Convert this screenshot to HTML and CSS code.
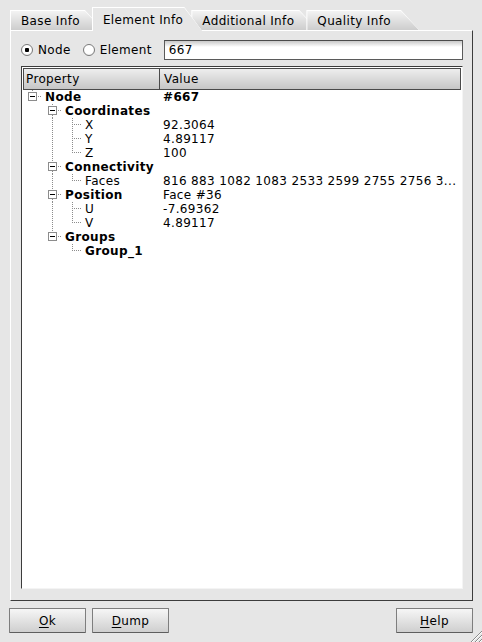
FILE: index.html
```html
<!DOCTYPE html>
<html lang="en">
<head>
    <meta charset="UTF-8">
    <meta name="viewport" content="width=device-width, initial-scale=1.0">
    <title>Mesh Element Info</title>
    <link rel="stylesheet" href="styles.css">
</head>
<body>
    <div class="dialog">
        <!-- Tabs -->
        <div class="tabbar">
            <div class="tab"><div class="tab-face">Base Info</div></div>
            <div class="tab selected"><div class="tab-face">Element Info</div></div>
            <div class="tab"><div class="tab-face">Additional Info</div></div>
            <div class="tab"><div class="tab-face">Quality Info</div></div>
        </div>

        <div class="panel">
            <!-- Node / Element selector -->
            <div class="selector">
                <label class="radio checked"><span class="radio-mark"></span>Node</label>
                <label class="radio"><span class="radio-mark"></span>Element</label>
                <div class="id-field">667</div>
            </div>

            <!-- Property tree -->
            <div class="tree">
                <div class="tree-header">
                    <div class="h-prop">Property</div>
                    <div class="h-val">Value</div>
                </div>
                <div class="tree-body">
                    <div class="row">
                        <div class="prop"><span class="br x up"><i class="exp"></i></span><span class="label bold">Node</span></div>
                        <div class="val bold">#667</div>
                    </div>
                    <div class="row">
                        <div class="prop"><span class="br"></span><span class="br x up down"><i class="exp"></i></span><span class="label bold">Coordinates</span></div>
                        <div class="val"></div>
                    </div>
                    <div class="row">
                        <div class="prop"><span class="br"></span><span class="br v"></span><span class="br t"></span><span class="label">X</span></div>
                        <div class="val">92.3064</div>
                    </div>
                    <div class="row">
                        <div class="prop"><span class="br"></span><span class="br v"></span><span class="br t"></span><span class="label">Y</span></div>
                        <div class="val">4.89117</div>
                    </div>
                    <div class="row">
                        <div class="prop"><span class="br"></span><span class="br v"></span><span class="br l"></span><span class="label">Z</span></div>
                        <div class="val">100</div>
                    </div>
                    <div class="row">
                        <div class="prop"><span class="br"></span><span class="br x up down"><i class="exp"></i></span><span class="label bold">Connectivity</span></div>
                        <div class="val"></div>
                    </div>
                    <div class="row">
                        <div class="prop"><span class="br"></span><span class="br v"></span><span class="br l"></span><span class="label">Faces</span></div>
                        <div class="val">816 883 1082 1083 2533 2599 2755 2756 3...</div>
                    </div>
                    <div class="row">
                        <div class="prop"><span class="br"></span><span class="br x up down"><i class="exp"></i></span><span class="label bold">Position</span></div>
                        <div class="val">Face #36</div>
                    </div>
                    <div class="row">
                        <div class="prop"><span class="br"></span><span class="br v"></span><span class="br t"></span><span class="label">U</span></div>
                        <div class="val">-7.69362</div>
                    </div>
                    <div class="row">
                        <div class="prop"><span class="br"></span><span class="br v"></span><span class="br l"></span><span class="label">V</span></div>
                        <div class="val">4.89117</div>
                    </div>
                    <div class="row">
                        <div class="prop"><span class="br"></span><span class="br x up"><i class="exp"></i></span><span class="label bold">Groups</span></div>
                        <div class="val"></div>
                    </div>
                    <div class="row">
                        <div class="prop"><span class="br"></span><span class="br"></span><span class="br l"></span><span class="label bold">Group_1</span></div>
                        <div class="val"></div>
                    </div>
                </div>
            </div>
        </div>

        <!-- Dialog buttons -->
        <div class="buttons">
            <button class="btn"><u>O</u>k</button>
            <button class="btn"><u>D</u>ump</button>
            <span class="spacer"></span>
            <button class="btn"><u>H</u>elp</button>
        </div>

        <svg class="grip" viewBox="0 0 12 12" width="12" height="12">
            <path d="M12 1 L1 12 M12 5 L5 12 M12 9 L9 12" stroke="#8a8a8a" stroke-width="1"/>
            <path d="M12 2 L2 12 M12 6 L6 12 M12 10 L10 12" stroke="#ffffff" stroke-width="1"/>
        </svg>
    </div>
</body>
</html>
```

FILE: styles.css
```css
:root {
    --dot-v: repeating-linear-gradient(to bottom, #8c8c8c 0 1px, transparent 1px 2px);
    --dot-h: repeating-linear-gradient(to right, #8c8c8c 0 1px, transparent 1px 2px);
}

body {
    margin: 0;
    background: #e6e6e6;
    font-family: 'DejaVu Sans', Verdana, sans-serif;
    font-size: 12px;
    letter-spacing: 0.35px;
    color: #000;
}

.dialog {
    position: relative;
    width: 482px;
    height: 642px;
    overflow: hidden;
    display: flex;
    flex-direction: column;
}

/* Tabs */

.tabbar {
    display: flex;
    align-items: flex-end;
    height: 30px;
    padding-left: 10px;
}

.tab {
    position: relative;
    height: 20px;
    padding: 1px 0 0 1px;
    box-sizing: border-box;
    background: #ffffff;
    clip-path: polygon(0 0, calc(100% - 18px) 0, 100% 100%, 0 100%);
    margin-left: -11px;
}

.tab:first-child {
    margin-left: 0;
}

.tab-face {
    height: 100%;
    padding: 0 23px 0 10px;
    line-height: 20px;
    background: linear-gradient(#f3f3f3, #cdcdcd);
    clip-path: polygon(0 0, calc(100% - 18px) 0, 100% 100%, 0 100%);
    white-space: nowrap;
}

.tab:last-child .tab-face {
    padding-right: 28px;
}

.tab.selected {
    z-index: 2;
    height: 24px;
    margin-bottom: -1px;
}

.tab.selected .tab-face {
    background: #e6e6e6;
    padding-top: 2px;
    padding-right: 19px;
    line-height: 20px;
    box-sizing: border-box;
}

/* Panel */

.panel {
    height: 571px;
    margin: 0 9px 0 10px;
    box-sizing: border-box;
    border-top: 1px solid #ffffff;
    border-left: 1px solid #ffffff;
    border-right: 1px solid #3c3c3c;
    border-bottom: 1px solid #3c3c3c;
    padding: 9px 9px 11px 10px;
    display: flex;
    flex-direction: column;
    gap: 6px;
}

.selector {
    display: flex;
    align-items: center;
    height: 20px;
}

.radio {
    display: flex;
    align-items: center;
    gap: 5px;
    margin-right: 12px;
}

.radio-mark {
    width: 12px;
    height: 12px;
    box-sizing: border-box;
    border-radius: 50%;
    border: 1px solid #7a7a7a;
    background: radial-gradient(circle at 50% 40%, #ffffff 55%, #dcdcdc 100%);
}

.radio.checked .radio-mark {
    background: radial-gradient(circle, #000 0 2px, transparent 2.5px), radial-gradient(circle at 50% 40%, #ffffff 55%, #dcdcdc 100%);
}

.id-field {
    flex: 1;
    height: 20px;
    box-sizing: border-box;
    border: 1px solid #5a5a5a;
    border-top-color: #4a4a4a;
    background: linear-gradient(#c8c8c8, #ffffff 6px);
    padding-left: 4px;
    line-height: 18px;
}

/* Tree */

.tree {
    flex: 1;
    display: flex;
    flex-direction: column;
    background: #ffffff;
    border-top: 1px solid #3c3c3c;
    border-left: 1px solid #3c3c3c;
    border-right: 1px solid #f4f4f4;
    border-bottom: 1px solid #f4f4f4;
}

.tree-header {
    display: flex;
    height: 22px;
    margin: 1px 1px 0 1px;
    box-sizing: border-box;
    border: 1px solid #4a4a4a;
    background: linear-gradient(#eeeeee, #c6c6c6);
    line-height: 20px;
}

.h-prop {
    width: 136px;
    padding-left: 2px;
    box-sizing: border-box;
    border-right: 1px solid #4a4a4a;
}

.h-val {
    padding-left: 4px;
}

.row {
    display: flex;
    height: 14px;
    line-height: 14px;
}

.prop {
    display: flex;
    width: 138px;
    flex: none;
}

.val {
    padding-left: 3px;
    white-space: nowrap;
    overflow: hidden;
}

.bold {
    font-weight: bold;
}

.label {
    padding-left: 3px;
    white-space: nowrap;
}

.br {
    flex: none;
    width: 20px;
    height: 14px;
    box-sizing: border-box;
}

.br.v {
    background: var(--dot-v) 10px 0 / 1px 14px no-repeat;
}

.br.t {
    background: var(--dot-v) 10px 0 / 1px 14px no-repeat,
                var(--dot-h) 12px 6px / 8px 1px no-repeat;
}

.br.l {
    background: var(--dot-v) 10px 0 / 1px 7px no-repeat,
                var(--dot-h) 12px 6px / 8px 1px no-repeat;
}

.br.x {
    padding: 2px 0 0 6px;
    background: var(--dot-h) 16px 6px / 4px 1px no-repeat;
}

.br.x.up {
    background: var(--dot-v) 10px 0 / 1px 2px no-repeat,
                var(--dot-h) 16px 6px / 4px 1px no-repeat;
}

.br.x.up.down {
    background: var(--dot-v) 10px 0 / 1px 2px no-repeat,
                var(--dot-v) 10px 11px / 1px 3px no-repeat,
                var(--dot-h) 16px 6px / 4px 1px no-repeat;
}

.exp {
    display: block;
    width: 9px;
    height: 9px;
    box-sizing: border-box;
    border: 1px solid #8c8c8c;
    background: linear-gradient(#000, #000) center / 5px 1px no-repeat, #ffffff;
}

/* Buttons */

.buttons {
    display: flex;
    gap: 6px;
    margin-top: 7px;
    padding: 0 9px;
}

.spacer {
    flex: 1;
}

.btn {
    width: 77px;
    height: 25px;
    border: 1px solid #7e7e7e;
    border-bottom-color: #5e5e5e;
    border-radius: 1px;
    background: linear-gradient(#f6f6f6, #cfcfcf);
    font-family: 'DejaVu Sans', Verdana, sans-serif;
    font-size: 12px;
    letter-spacing: 0.35px;
    color: #000;
    padding: 0;
}

.btn u {
    text-underline-offset: 2px;
}

.grip {
    position: absolute;
    right: 0;
    bottom: 0;
}
```
